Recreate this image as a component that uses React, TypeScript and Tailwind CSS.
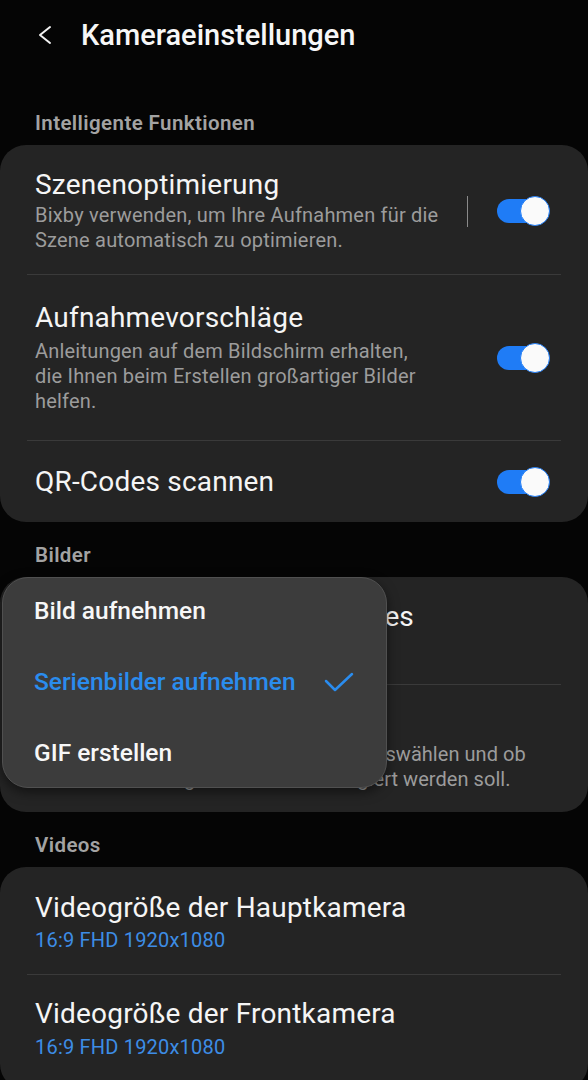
import type { ReactNode } from "react";

const font = { fontFamily: "Roboto, 'Noto Sans', Arial, sans-serif" };

const title = "text-[28px] leading-[32px] tracking-[0.2px] text-[#f5f5f5]";
const desc = "text-[20px] leading-[25px] tracking-[0.2px] text-[#9c9c9c]";
const sub = "text-[20px] leading-[25px] tracking-[0.2px] text-[#3d8de6]";

function Toggle() {
  return (
    <div className="relative h-[30px] w-[53px] shrink-0">
      <div className="absolute left-0 top-[3px] h-[24px] w-[44px] rounded-full bg-[#1f7cf6]" />
      <div className="absolute right-0 top-0 h-[30px] w-[30px] rounded-full border-[1.5px] border-[#1f7cf6] bg-[#fafafa]" />
    </div>
  );
}

function SectionLabel({ children }: { children: ReactNode }) {
  return (
    <div className="px-[35px] pb-[10px] text-[20.5px] font-semibold leading-[24px] tracking-[0.4px] text-[#a3a3a3]">
      {children}
    </div>
  );
}

function Divider() {
  return <div className="mx-[27px] h-px bg-[#3a3a3a]" />;
}

function Card({ children }: { children: ReactNode }) {
  return <div className="rounded-[26px] bg-[#242424]">{children}</div>;
}

export default function App() {
  return (
    <div className="min-h-[1080px] w-[588px] overflow-hidden bg-[#050505]" style={font}>
      {/* header */}
      <div className="flex h-[70px] items-center">
        <svg width="16" height="20" viewBox="0 0 16 20" className="ml-[37px]">
          <polyline
            points="13,2 3,10 13,18"
            fill="none"
            stroke="#f2f2f2"
            strokeWidth="2"
            strokeLinecap="round"
            strokeLinejoin="round"
          />
        </svg>
        <h1 className="ml-[28px] text-[29px] font-medium leading-[34px] text-[#f7f7f7]">
          Kameraeinstellungen
        </h1>
      </div>

      {/* Intelligente Funktionen */}
      <div className="pt-[41px]">
        <SectionLabel>Intelligente Funktionen</SectionLabel>
        <Card>
          <div className="flex items-center pl-[35px] pr-[38px] pt-[24px] pb-[21px]">
            <div className="flex-1">
              <div className={title}>Szenenoptimierung</div>
              <div className={`mt-[2px] ${desc}`}>
                Bixby verwenden, um Ihre Aufnahmen für die
                <br />
                Szene automatisch zu optimieren.
              </div>
            </div>
            <div className="mr-[29px] h-[31px] w-px bg-[#8a8a8a]" />
            <Toggle />
          </div>
          <Divider />
          <div className="flex items-center pl-[35px] pr-[38px] pt-[27px] pb-[26px]">
            <div className="flex-1">
              <div className={title}>Aufnahmevorschläge</div>
              <div className={`mt-[5px] ${desc}`}>
                Anleitungen auf dem Bildschirm erhalten,
                <br />
                die Ihnen beim Erstellen großartiger Bilder
                <br />
                helfen.
              </div>
            </div>
            <Toggle />
          </div>
          <Divider />
          <div className="flex h-[81px] items-center pl-[35px] pr-[38px]">
            <div className={`flex-1 ${title}`}>QR-Codes scannen</div>
            <Toggle />
          </div>
        </Card>
      </div>

      {/* Bilder */}
      <div className="pt-[21px]">
        <SectionLabel>Bilder</SectionLabel>
        <div className="relative">
          <Card>
            <div className="pl-[35px] pr-[38px] pt-[24px] pb-[23px]">
              <div className="whitespace-nowrap text-[28px] leading-[32px] tracking-[-0.1px] text-[#f5f5f5]">
                Auslöser zum Rand ziehen des
              </div>
              <div className={`mt-[3px] ${sub}`}>Serienbilder aufnehmen</div>
            </div>
            <Divider />
            <div className="pl-[35px] pr-[20px] pt-[20px] pb-[20px]">
              <div className={title}>Erweiterte Bildoptionen</div>
              <div className="mt-[5px] whitespace-nowrap text-[20px] leading-[25px] tracking-[0.05px] text-[#9c9c9c]">
                Speicheroptionen sowie Bildformate auswählen und ob
                <br />
                die Bildverzerrung automatisch korrigiert werden soll.
              </div>
            </div>
          </Card>

          {/* popup menu */}
          <div className="absolute left-[2px] top-0 h-[211px] w-[385px] rounded-[26px] border border-[#505050] bg-[#3c3c3c] shadow-[0_4px_12px_rgba(0,0,0,0.5)]">
            <div className="flex h-full flex-col justify-center pl-[31px] pr-[30px]">
              <div className="flex h-[71px] shrink-0 items-center text-[24.5px] font-medium text-[#f7f7f7]">
                Bild aufnehmen
              </div>
              <div className="flex h-[71px] shrink-0 items-center justify-between text-[24.5px] font-medium text-[#2a8cee]">
                <span>Serienbilder aufnehmen</span>
                <svg width="30" height="22" viewBox="0 0 30 22" className="mr-[2px]">
                  <polyline
                    points="2,9 11,18 28,2"
                    fill="none"
                    stroke="#2a8cee"
                    strokeWidth="2.5"
                    strokeLinecap="round"
                    strokeLinejoin="round"
                  />
                </svg>
              </div>
              <div className="flex h-[71px] shrink-0 items-center text-[24.5px] font-medium text-[#f7f7f7]">
                GIF erstellen
              </div>
            </div>
          </div>
        </div>
      </div>

      {/* Videos */}
      <div className="pt-[21px]">
        <SectionLabel>Videos</SectionLabel>
        <Card>
          <div className="pl-[35px] pr-[38px] pt-[25px] pb-[21px]">
            <div className={title}>Videogröße der Hauptkamera</div>
            <div className={`mt-[4px] ${sub}`}>16:9 FHD 1920x1080</div>
          </div>
          <Divider />
          <div className="pl-[35px] pr-[38px] pt-[23px] pb-[30px]">
            <div className={title}>Videogröße der Frontkamera</div>
            <div className={`mt-[5px] ${sub}`}>16:9 FHD 1920x1080</div>
          </div>
        </Card>
      </div>
    </div>
  );
}
